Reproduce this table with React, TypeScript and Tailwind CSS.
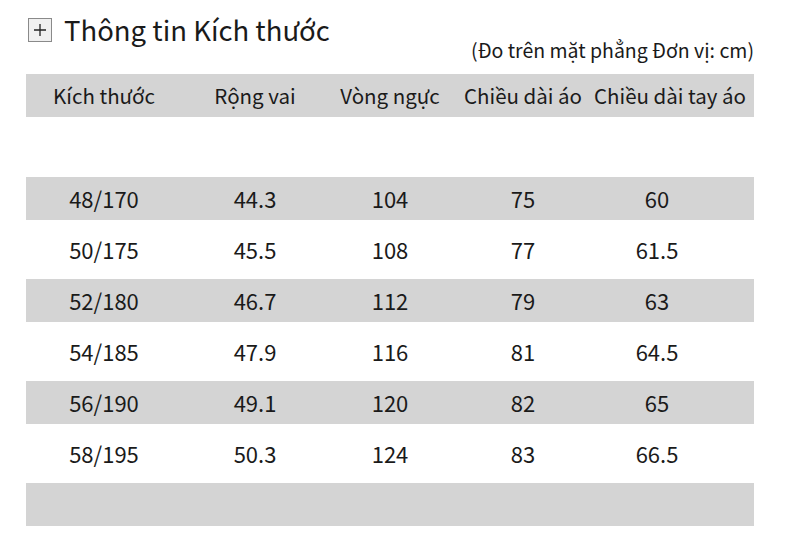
import React from "react";

const headers = ["Kích thước", "Rộng vai", "Vòng ngực", "Chiều dài áo", "Chiều dài tay áo"];

const rows = [
  ["48/170", "44.3", "104", "75", "60"],
  ["50/175", "45.5", "108", "77", "61.5"],
  ["52/180", "46.7", "112", "79", "63"],
  ["54/185", "47.9", "116", "81", "64.5"],
  ["56/190", "49.1", "120", "82", "65"],
  ["58/195", "50.3", "124", "83", "66.5"],
];

const cols = "grid grid-cols-[156px_146px_124px_142px_1fr] items-center";

export default function App() {
  return (
    <div
      className="w-[790px] h-[553px] bg-white text-[#1a1a1a] overflow-hidden"
      style={{ fontFamily: '"Noto Sans CJK SC", "Noto Sans", sans-serif' }}
    >
      {/* title */}
      <div className="flex items-center gap-3 pl-[28px] pt-[15px] h-[44px]">
        <div className="w-[24px] h-[24px] border border-[#8a8a8a] bg-[#f0f0f0] flex items-center justify-center">
          <svg width="16" height="16" viewBox="0 0 16 16">
            <path d="M8 2v12M2 8h12" stroke="#222" strokeWidth="1.3" />
          </svg>
        </div>
        <h1 className="text-[27.5px] leading-none">Thông tin Kích thước</h1>
      </div>
      <div className="flex justify-end pr-[36px] text-[19.5px] leading-none h-[30px] -mt-[4px]">
        (Đo trên mặt phẳng Đơn vị: cm)
      </div>

      {/* table */}
      <div className="mx-[26px] mt-[4px] w-[728px] flex flex-col gap-[8px]">
        <div className={`${cols} h-[43px] bg-[#d4d4d4] text-[20.5px]`}>
          {headers.map((h, i) => (
            <div key={h} className={i === 4 ? "text-center whitespace-nowrap -ml-[8px]" : "text-center whitespace-nowrap"}>
              {h}
            </div>
          ))}
        </div>
        <div className="h-[43px] mb-[1px]" />
        {rows.map((r, idx) => (
          <div
            key={r[0]}
            className={`${cols} h-[43px] text-[22px] ${idx % 2 === 0 ? "bg-[#d4d4d4]" : ""}`}
          >
            {r.map((v, i) => (
              <div key={i} className={i === 4 ? "text-center pr-[34px]" : "text-center"}>
                {v}
              </div>
            ))}
          </div>
        ))}
        <div className="h-[43px] bg-[#d4d4d4]" />
      </div>
    </div>
  );
}
